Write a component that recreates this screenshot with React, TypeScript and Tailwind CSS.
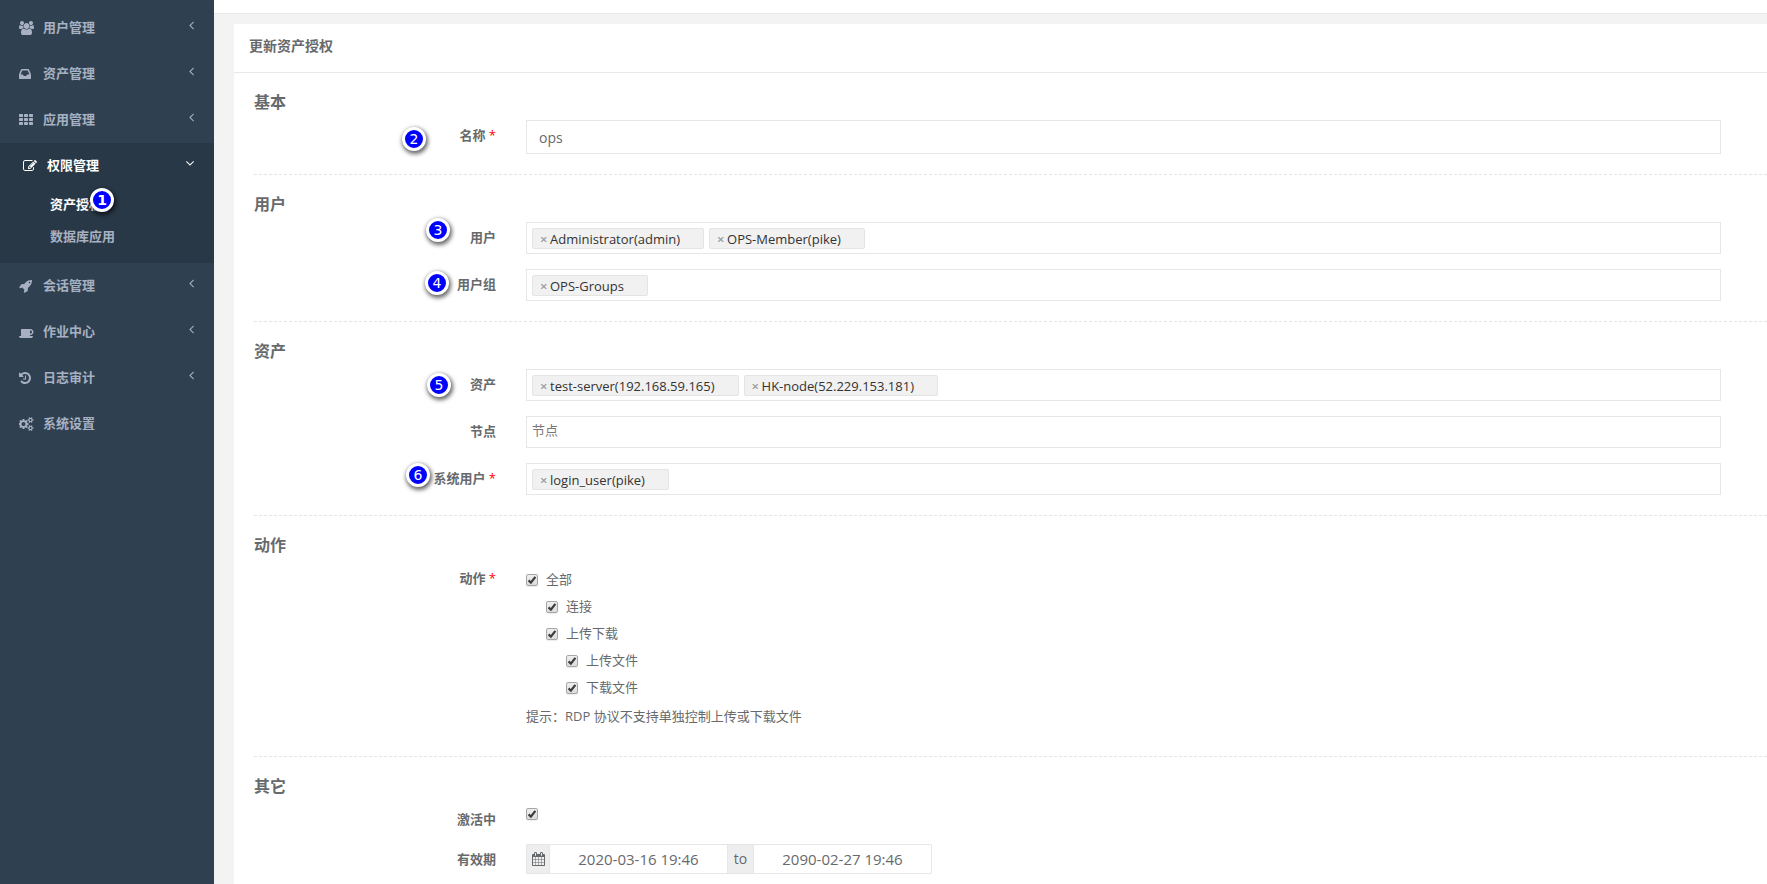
import type { ReactNode } from 'react';

const icons = {
  users: {
    box: '0 0 1920 1792',
    d: 'M593 896q-162 5-265 128h-134q-82 0-138-40.5t-56-118.5q0-353 124-353 6 0 43.5 21t97.5 42.5 119 21.5q67 0 133-23-5 37-5 66 0 139 81 256zm1071 637q0 120-73 189.5t-194 69.5h-874q-121 0-194-69.5t-73-189.5q0-53 3.5-103.5t14-109 26.5-108.5 43-97.5 62-81 85.5-53.5 111.5-20q10 0 43 21.5t73 48 107 48 135 21.5 135-21.5 107-48 73-48 43-21.5q61 0 111.5 20t85.5 53.5 62 81 43 97.5 26.5 108.5 14 109 3.5 103.5zm-1024-1277q0 106-75 181t-181 75-181-75-75-181 75-181 181-75 181 75 75 181zm704 384q0 159-112.5 271.5t-271.5 112.5-271.5-112.5-112.5-271.5 112.5-271.5 271.5-112.5 271.5 112.5 112.5 271.5zm576 225q0 78-56 118.5t-138 40.5h-134q-103-123-265-128 81-117 81-256 0-29-5-66 66 23 133 23 59 0 119-21.5t97.5-42.5 43.5-21q124 0 124 353zm-128-609q0 106-75 181t-181 75-181-75-75-181 75-181 181-75 181 75 75 181z',
  },
  inbox: {
    box: '128 0 1536 1792',
    d: 'M1151 960h316q-1-3-2.5-8.5t-2.5-7.5l-212-496h-708l-212 496q-1 3-2.5 8t-2.5 8h316l95 192h320zm513 30v482q0 26-19 45t-45 19h-1408q-26 0-45-19t-19-45v-482q0-62 25-123l238-552q10-25 36.5-42t52.5-17h832q26 0 52.5 17t36.5 42l238 552q25 61 25 123z',
  },
  th: {
    box: '0 0 1792 1792',
    d: 'M512 1248v192q0 40-28 68t-68 28h-320q-40 0-68-28t-28-68v-192q0-40 28-68t68-28h320q40 0 68 28t28 68zm0-512v192q0 40-28 68t-68 28h-320q-40 0-68-28t-28-68v-192q0-40 28-68t68-28h320q40 0 68 28t28 68zm640 512v192q0 40-28 68t-68 28h-320q-40 0-68-28t-28-68v-192q0-40 28-68t68-28h320q40 0 68 28t28 68zm-640-1024v192q0 40-28 68t-68 28h-320q-40 0-68-28t-28-68v-192q0-40 28-68t68-28h320q40 0 68 28t28 68zm640 512v192q0 40-28 68t-68 28h-320q-40 0-68-28t-28-68v-192q0-40 28-68t68-28h320q40 0 68 28t28 68zm640 512v192q0 40-28 68t-68 28h-320q-40 0-68-28t-28-68v-192q0-40 28-68t68-28h320q40 0 68 28t28 68zm-640-1024v192q0 40-28 68t-68 28h-320q-40 0-68-28t-28-68v-192q0-40 28-68t68-28h320q40 0 68 28t28 68zm640 512v192q0 40-28 68t-68 28h-320q-40 0-68-28t-28-68v-192q0-40 28-68t68-28h320q40 0 68 28t28 68zm0-512v192q0 40-28 68t-68 28h-320q-40 0-68-28t-28-68v-192q0-40 28-68t68-28h320q40 0 68 28t28 68z',
  },
  edit: {
    box: '0 0 1792 1792',
    d: 'M888 1184l116-116-152-152-116 116v56h96v96h56zm440-720q-16-16-33 1l-350 350q-17 17-1 33t33-1l350-350q17-17 1-33zm80 594v190q0 119-84.5 203.5t-203.5 84.5h-832q-119 0-203.5-84.5t-84.5-203.5v-832q0-119 84.5-203.5t203.5-84.5h832q63 0 117 25 15 7 18 23 3 17-9 29l-49 49q-14 14-32 8-23-6-45-6h-832q-66 0-113 47t-47 113v832q0 66 47 113t113 47h832q66 0 113-47t47-113v-126q0-13 9-22l64-64q15-15 35-7t20 29zm-96-738l288 288-672 672h-288v-288zm444 132l-92 92-288-288 92-92q28-28 68-28t68 28l152 152q28 28 28 68t-28 68z',
  },
  rocket: {
    box: '0 0 1792 1792',
    d: 'M1440 448q0-40-28-68t-68-28-68 28-28 68 28 68 68 28 68-28 28-68zm224-288q0 249-75.5 430.5t-253.5 360.5q-81 80-195 176l-20 379q-2 16-16 26l-384 224q-7 4-16 4-12 0-23-9l-64-64q-13-14-8-32l85-276-281-281-276 85q-3 1-9 1-14 0-23-9l-64-64q-17-19-5-39l224-384q10-14 26-16l379-20q96-114 176-195 188-187 358-258t431-71q14 0 24 9.5t10 22.5z',
  },
  coffee: {
    box: '0 0 1920 1792',
    d: 'M1664 896q0-80-56-136t-136-56h-64v384h64q80 0 136-56t56-136zm-1664 512h1792q0 106-75 181t-181 75h-1280q-106 0-181-75t-75-181zm1856-512q0 159-112.5 271.5t-271.5 112.5h-64v32q0 92-66 158t-158 66h-704q-92 0-158-66t-66-158v-736q0-26 19-45t45-19h1152q159 0 271.5 112.5t112.5 271.5z',
  },
  history: {
    box: '128 0 1536 1792',
    d: 'M1664 896q0 156-61 298t-164 245-245 164-298 61q-172 0-327-72.5t-264-204.5q-7-10-6.5-22.5t8.5-20.5l137-138q10-9 25-9 16 2 23 12 73 95 179 147t225 52q104 0 198.5-40.5t163.5-109.5 109.5-163.5 40.5-198.5-40.5-198.5-109.5-163.5-163.5-109.5-198.5-40.5q-98 0-188 35.5t-160 101.5l137 138q31 30 14 69-17 40-59 40h-448q-26 0-45-19t-19-45v-448q0-42 40-59 39-17 69 14l130 129q107-101 244.5-156.5t284.5-55.5q156 0 298 61t245 164 164 245 61 298zm-640-288v448q0 14-9 23t-23 9h-320q-14 0-23-9t-9-23v-64q0-14 9-23t23-9h224v-352q0-14 9-23t23-9h64q14 0 23 9t9 23z',
  },
  cogs: {
    box: '0 0 1920 1792',
    d: 'M832 896q0-106-75-181t-181-75-181 75-75 181 75 181 181 75 181-75 75-181zm768 512q0-52-38-90t-90-38-90 38-38 90q0 53 37.5 90.5t90.5 37.5 90.5-37.5 37.5-90.5zm0-1024q0-52-38-90t-90-38-90 38-38 90q0 53 37.5 90.5t90.5 37.5 90.5-37.5 37.5-90.5zm-384 421v185q0 10-7 19.5t-16 10.5l-155 24q-11 35-32 76 34 48 90 115 7 11 7 20 0 12-7 19-23 30-82.5 89.5t-78.5 59.5q-11 0-21-7l-115-90q-37 19-77 31-11 108-23 155-7 24-30 24h-186q-11 0-20-7.5t-10-17.5l-23-153q-34-10-75-31l-118 89q-7 7-20 7-11 0-21-8-144-133-144-160 0-9 7-19 10-14 41-53t47-61q-23-44-35-82l-152-24q-10-1-17-9.5t-7-19.5v-185q0-10 7-19.5t16-10.5l155-24q11-35 32-76-34-48-90-115-7-11-7-20 0-12 7-20 22-30 82-89t79-59q11 0 21 7l115 90q34-18 77-32 11-108 23-154 7-24 30-24h186q11 0 20 7.5t10 17.5l23 153q34 10 75 31l118-89q8-7 20-7 11 0 21 8 144 133 144 160 0 8-7 19-12 16-42 54t-45 60q23 48 34 82l152 23q10 2 17 10.5t7 19.5zm640 533v140q0 16-149 31-12 27-30 52 51 113 51 138 0 4-4 7-122 71-124 71-8 0-46-47t-52-68q-20 2-30 2t-30-2q-14 21-52 68t-46 47q-2 0-124-71-4-3-4-7 0-25 51-138-18-25-30-52-149-15-149-31v-140q0-16 149-31 13-29 30-52-51-113-51-138 0-4 4-7 4-2 35-20t59-34 30-16q8 0 46 46.5t52 67.5q20-2 30-2t30 2q51-71 92-112l6-2q4 0 124 70 4 3 4 7 0 25-51 138 17 23 30 52 149 15 149 31zm0-1024v140q0 16-149 31-12 27-30 52 51 113 51 138 0 4-4 7-122 71-124 71-8 0-46-47t-52-68q-20 2-30 2t-30-2q-14 21-52 68t-46 47q-2 0-124-71-4-3-4-7 0-25 51-138-18-25-30-52-149-15-149-31v-140q0-16 149-31 13-29 30-52-51-113-51-138 0-4 4-7 4-2 35-20t59-34 30-16q8 0 46 46.5t52 67.5q20-2 30-2t30 2q51-71 92-112l6-2q4 0 124 70 4 3 4 7 0 25-51 138 17 23 30 52 149 15 149 31z',
  },
  angleLeft: {
    box: '576 0 640 1792',
    d: 'M1203 544q0 13-10 23l-393 393 393 393q10 10 10 23t-10 23l-50 50q-10 10-23 10t-23-10l-466-466q-10-10-10-23t10-23l466-466q10-10 23-10t23 10l50 50q10 10 10 23z',
  },
  angleDown: {
    box: '384 0 1024 1792',
    d: 'M1395 736q0 13-10 23l-466 466q-10 10-23 10t-23-10l-466-466q-10-10-10-23t10-23l50-50q10-10 23-10t23 10l393 393 393-393q10-10 23-10t23 10l50 50q10 10 10 23z',
  },
  calendar: {
    box: '64 0 1664 1792',
    d: 'M192 1664h288v-288h-288v288zm352 0h320v-288h-320v288zm-352-352h288v-320h-288v320zm352 0h320v-320h-320v320zm-352-384h288v-288h-288v288zm736 736h320v-288h-320v288zm-384-736h320v-288h-320v288zm768 736h288v-288h-288v288zm-384-352h320v-320h-320v320zm-352-864v-288q0-13-9.5-22.5t-22.5-9.5h-64q-13 0-22.5 9.5t-9.5 22.5v288q0 13 9.5 22.5t22.5 9.5h64q13 0 22.5-9.5t9.5-22.5zm736 864h288v-320h-288v320zm-384-384h320v-288h-320v288zm384 0h288v-288h-288v288zm32-480v-288q0-13-9.5-22.5t-22.5-9.5h-64q-13 0-22.5 9.5t-9.5 22.5v288q0 13 9.5 22.5t22.5 9.5h64q13 0 22.5-9.5t9.5-22.5zm384-64v1280q0 52-38 90t-90 38h-1408q-52 0-90-38t-38-90v-1280q0-52 38-90t90-38h128v-96q0-66 47-113t113-47h64q66 0 113 47t47 113v96h384v-96q0-66 47-113t113-47h64q66 0 113 47t47 113v96h128q52 0 90 38t38 90z',
  },
};

type IconName = keyof typeof icons;

function Icon({ name }: { name: IconName }) {
  return (
    <svg viewBox={icons[name].box} className="h-[14px] w-auto fill-current" aria-hidden="true">
      <path d={icons[name].d} />
    </svg>
  );
}

const menu: { icon: IconName; label: string; leaf?: boolean; children?: string[] }[] = [
  { icon: 'users', label: '用户管理' },
  { icon: 'inbox', label: '资产管理' },
  { icon: 'th', label: '应用管理' },
  { icon: 'edit', label: '权限管理', children: ['资产授权', '数据库应用'] },
  { icon: 'rocket', label: '会话管理' },
  { icon: 'coffee', label: '作业中心' },
  { icon: 'history', label: '日志审计' },
  { icon: 'cogs', label: '系统设置', leaf: true },
];

// Numbered step marker, placed over the element it refers to
function Step({ n, className }: { n: number; className: string }) {
  return (
    <span
      className={`absolute z-10 flex size-6 items-center justify-center rounded-full border-3 border-white bg-[#0000fe] font-['DejaVu_Sans'] text-sm leading-none text-white shadow-[1px_2px_4px_1px_rgba(0,0,0,0.6)] ${className}`}
    >
      {n}
    </span>
  );
}

function Sidebar() {
  return (
    <nav className="w-[214px] shrink-0 bg-[#2f4050] pt-[5px] text-[13px] font-semibold text-[#a7b1c2]">
      <ul>
        {menu.map((item) => (
          <li key={item.label} className={item.children ? 'border-l-4 border-[#293846] bg-[#293846] pb-[10px]' : ''}>
            <a href="#" className={`flex h-[46px] items-center pr-5 pl-[19px] ${item.children ? 'text-white' : ''}`}>
              <span className="w-6">
                <Icon name={item.icon} />
              </span>
              <span className="flex-1">{item.label}</span>
              {!item.leaf && (
                <span className="pb-[6px]">
                  <Icon name={item.children ? 'angleDown' : 'angleLeft'} />
                </span>
              )}
            </a>
            {item.children && (
              <ul>
                {item.children.map((child, i) => (
                  <li key={child} className="relative">
                    <a href="#" className={`flex h-8 items-center pl-[46px] ${i === 0 ? 'text-white' : ''}`}>
                      {child}
                    </a>
                    {i === 0 && <Step n={1} className="-top-[1px] left-[86px]" />}
                  </li>
                ))}
              </ul>
            )}
          </li>
        ))}
      </ul>
    </nav>
  );
}

function Section({ title, children }: { title: string; children: ReactNode }) {
  return (
    <section className="border-t border-dashed border-[#e3e5e7] pt-[17px] pb-5 first:border-t-0">
      <h3 className="h-[30px] text-base leading-6 font-semibold">{title}</h3>
      <div className="flex flex-col gap-[15px]">{children}</div>
    </section>
  );
}

interface RowProps {
  id: string;
  label: string;
  required?: boolean;
  step?: ReactNode;
  children: ReactNode;
}

function Row({ id, label, required, step, children }: RowProps) {
  return (
    <div className="relative flex items-start gap-[30px] pr-[46px]">
      <label htmlFor={id} className="w-[242px] shrink-0 pt-[5px] text-right text-[13px] leading-5 font-semibold">
        {label}
        {required && <span className="font-normal text-[#ff0000]"> *</span>}
      </label>
      {step}
      <div className="min-w-0 flex-1">{children}</div>
    </div>
  );
}

function TagSelect({ id, tags = [], placeholder }: { id: string; tags?: string[]; placeholder?: string }) {
  return (
    <div className="flex h-8 items-start gap-[5px] border border-[#e5e6e7] px-[5px] pt-[5px]">
      {tags.map((tag) => (
        <span
          key={tag}
          className="flex h-[21px] shrink-0 items-center rounded-xs border border-[#e4e4e4] bg-[#f1f1f1] pr-[23px] pl-[7px] text-[13px] leading-5 text-[#333]"
        >
          <button type="button" aria-label={`移除 ${tag}`} className="w-[10px] text-left font-semibold text-[#999]">
            ×
          </button>
          {tag}
        </span>
      ))}
      <input
        id={id}
        placeholder={placeholder}
        className="h-[18px] min-w-0 flex-1 text-[13px] outline-none placeholder:text-[#777]"
      />
    </div>
  );
}

function CheckBox({ id }: { id: string }) {
  return (
    <span className="grid size-3 shrink-0">
      <input
        id={id}
        type="checkbox"
        defaultChecked
        className="peer col-start-1 row-start-1 size-3 appearance-none rounded-xs border border-[#a6a6a6] bg-linear-to-b from-[#efefef] to-[#dcdcdc] shadow-[0_1px_1px_rgba(0,0,0,0.08)]"
      />
      <svg
        viewBox="0 0 12 12"
        className="pointer-events-none invisible col-start-1 row-start-1 fill-none stroke-[#3c3c3c] stroke-[2.2] peer-checked:visible"
      >
        <path d="M2.6 6.4l2.3 2.3L9.4 2.8" />
      </svg>
    </span>
  );
}

const actions = [
  { id: 'all', label: '全部', indent: '' },
  { id: 'connect', label: '连接', indent: 'pl-5' },
  { id: 'updownload', label: '上传下载', indent: 'pl-5' },
  { id: 'upload', label: '上传文件', indent: 'pl-10' },
  { id: 'download', label: '下载文件', indent: 'pl-10' },
];

export default function App() {
  return (
    <div className="flex min-h-screen bg-[#f3f3f4] font-['Open_Sans','Noto_Sans_CJK_SC',sans-serif] text-[13px] text-[#676a6c]">
      <Sidebar />
      <main className="flex min-w-0 flex-1 flex-col">
        <div className="h-[14px] border-b border-[#e7eaec] bg-white" />
        <div className="mt-[10px] ml-5 flex-1 bg-white">
          <header className="h-[49px] border-b border-[#e7eaec] px-[15px] pt-3">
            <h5 className="text-sm leading-5 font-semibold">更新资产授权</h5>
          </header>
          <form className="pl-5">
            <Section title="基本">
              <Row id="name" label="名称" required step={<Step n={2} className="top-[7px] left-[148px]" />}>
                <input
                  id="name"
                  defaultValue="ops"
                  className="block h-[34px] w-full border border-[#e5e6e7] px-3 text-sm outline-none"
                />
              </Row>
            </Section>

            <Section title="用户">
              <Row id="users" label="用户" step={<Step n={3} className="-top-1 left-[172px]" />}>
                <TagSelect id="users" tags={['Administrator(admin)', 'OPS-Member(pike)']} />
              </Row>
              <Row id="groups" label="用户组" step={<Step n={4} className="top-[2px] left-[171px]" />}>
                <TagSelect id="groups" tags={['OPS-Groups']} />
              </Row>
            </Section>

            <Section title="资产">
              <Row id="assets" label="资产" step={<Step n={5} className="top-[4px] left-[173px]" />}>
                <TagSelect id="assets" tags={['test-server(192.168.59.165)', 'HK-node(52.229.153.181)']} />
              </Row>
              <Row id="nodes" label="节点">
                <TagSelect id="nodes" placeholder="节点" />
              </Row>
              <Row id="system-users" label="系统用户" required step={<Step n={6} className="top-[0px] left-[152px]" />}>
                <TagSelect id="system-users" tags={['login_user(pike)']} />
              </Row>
            </Section>

            <Section title="动作">
              <Row id="all" label="动作" required>
                <ul className="pt-[3px]">
                  {actions.map((action) => (
                    <li key={action.id} className={`flex h-[27px] items-center gap-2 ${action.indent}`}>
                      <CheckBox id={action.id} />
                      <label htmlFor={action.id}>{action.label}</label>
                    </li>
                  ))}
                </ul>
                <p className="pt-[5px] pb-[10px] leading-5">提示：RDP 协议不支持单独控制上传或下载文件</p>
              </Row>
            </Section>

            <Section title="其它">
              <Row id="active" label="激活中">
                <div className="pt-1">
                  <CheckBox id="active" />
                </div>
              </Row>
              <Row id="date-start" label="有效期">
                <div className="flex h-[30px] w-[406px] rounded-r-xs border border-[#e5e6e7] text-[15px]">
                  <span className="flex w-[23px] items-center justify-center border-r border-[#e5e6e7] bg-[#eee]">
                    <Icon name="calendar" />
                  </span>
                  <input
                    id="date-start"
                    defaultValue="2020-03-16 19:46"
                    className="min-w-0 flex-1 text-center outline-none"
                  />
                  <span className="flex w-[27px] items-center justify-center border-x border-[#e5e6e7] bg-[#eee] text-sm">
                    to
                  </span>
                  <input
                    aria-label="有效期结束"
                    defaultValue="2090-02-27 19:46"
                    className="min-w-0 flex-1 text-center outline-none"
                  />
                </div>
              </Row>
            </Section>
          </form>
        </div>
      </main>
    </div>
  );
}
